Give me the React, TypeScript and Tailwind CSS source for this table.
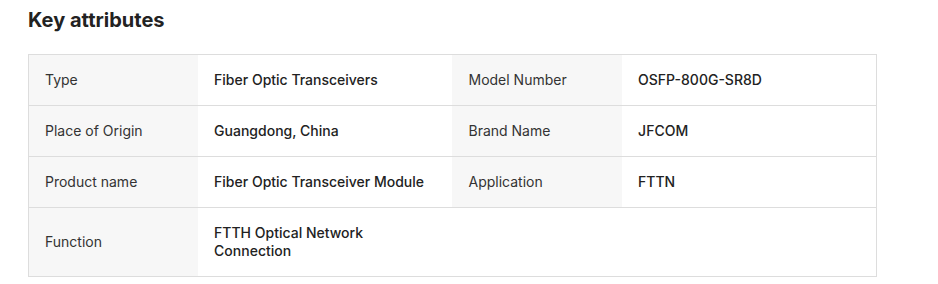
const rows: [string, string, string?, string?][] = [
  ['Type', 'Fiber Optic Transceivers', 'Model Number', 'OSFP-800G-SR8D'],
  ['Place of Origin', 'Guangdong, China', 'Brand Name', 'JFCOM'],
  ['Product name', 'Fiber Optic Transceiver Module', 'Application', 'FTTN'],
  ['Function', 'FTTH Optical Network Connection'],
];

export default function App() {
  return (
    <div className="bg-white min-h-screen pl-7 pt-[6px] font-['Inter',sans-serif]">
      <h2 className="text-[20px] leading-7 font-bold text-[#222]">Key attributes</h2>
      <table className="mt-5 w-[849px] table-fixed border-collapse border border-[#dddddd] text-[14px] leading-[18px]">
        <colgroup>
          <col className="w-[20%]" />
          <col className="w-[30%]" />
          <col className="w-[20%]" />
          <col className="w-[30%]" />
        </colgroup>
        <tbody>
          {rows.map(([k1, v1, k2, v2]) => (
            <tr key={k1} className="border-b border-[#dddddd]">
              <td className="bg-[#f7f7f7] px-4 py-4 text-[#333]">{k1}</td>
              <td className="px-4 py-4 font-medium text-[#222]">{v1}</td>
              {k2 ? (
                <>
                  <td className="bg-[#f7f7f7] px-4 py-4 text-[#333]">{k2}</td>
                  <td className="px-4 py-4 font-medium text-[#222]">{v2}</td>
                </>
              ) : (
                <>
                  <td />
                  <td />
                </>
              )}
            </tr>
          ))}
        </tbody>
      </table>
    </div>
  );
}
